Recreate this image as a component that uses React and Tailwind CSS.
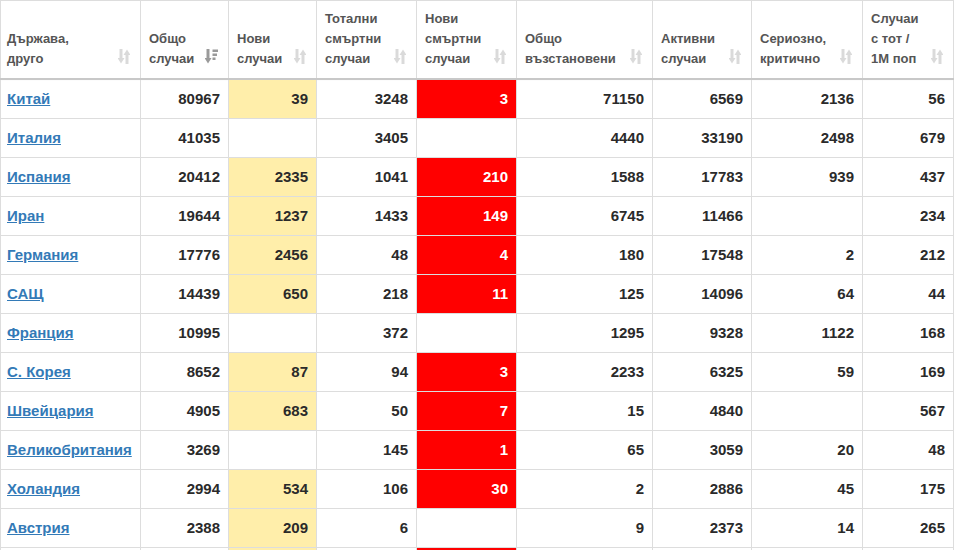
import React from 'react';

const columns = [
    { label: ['Държава,', 'друго'], width: 'w-[140px]' },
    { label: ['Общо', 'случаи'], width: 'w-[88px]', sorted: true },
    { label: ['Нови', 'случаи'], width: 'w-[88px]' },
    { label: ['Тотални', 'смъртни', 'случаи'], width: 'w-[100px]' },
    { label: ['Нови', 'смъртни', 'случаи'], width: 'w-[100px]' },
    { label: ['Общо', 'възстановени'], width: 'w-[136px]' },
    { label: ['Активни', 'случаи'], width: 'w-[99px]' },
    { label: ['Сериозно,', 'критично'], width: 'w-[111px]' },
    { label: ['Случаи', 'с тот /', '1М поп'], width: 'w-[91px]' },
];

// country, total, new, deaths, new deaths, recovered, active, serious, per 1M
const rows = [
    ['Китай', '80967', '39', '3248', '3', '71150', '6569', '2136', '56'],
    ['Италия', '41035', '', '3405', '', '4440', '33190', '2498', '679'],
    ['Испания', '20412', '2335', '1041', '210', '1588', '17783', '939', '437'],
    ['Иран', '19644', '1237', '1433', '149', '6745', '11466', '', '234'],
    ['Германия', '17776', '2456', '48', '4', '180', '17548', '2', '212'],
    ['САЩ', '14439', '650', '218', '11', '125', '14096', '64', '44'],
    ['Франция', '10995', '', '372', '', '1295', '9328', '1122', '168'],
    ['С. Корея', '8652', '87', '94', '3', '2233', '6325', '59', '169'],
    ['Швейцария', '4905', '683', '50', '7', '15', '4840', '', '567'],
    ['Великобритания', '3269', '', '145', '1', '65', '3059', '20', '48'],
    ['Холандия', '2994', '534', '106', '30', '2', '2886', '45', '175'],
    ['Австрия', '2388', '209', '6', '', '9', '2373', '14', '265'],
    ['Белгия', '2257', '462', '37', '16', '1', '2203', '33', '195'],
];

const SortIcon = () => (
    <svg width="12" height="15" viewBox="0 0 12 15" className="text-[#dadada]">
        <path d="M3 0v10" stroke="currentColor" strokeWidth="3" fill="none" />
        <path d="M-0.5 9h7l-3.5 5.5z" fill="currentColor" />
        <path d="M9 5v10" stroke="currentColor" strokeWidth="3" fill="none" />
        <path d="M5.5 6h7l-3.5-5.5z" fill="currentColor" />
    </svg>
);

const SortedIcon = () => (
    <svg width="13" height="15" viewBox="0 0 13 15" className="text-[#9a9a9a]">
        <path d="M3 0v10" stroke="currentColor" strokeWidth="3" fill="none" />
        <path d="M-0.5 9h7l-3.5 5.5z" fill="currentColor" />
        <rect x="7.5" y="0.5" width="5.5" height="2.5" fill="currentColor" />
        <rect x="7.5" y="4.5" width="4.5" height="2.5" fill="currentColor" />
        <rect x="7.5" y="8.5" width="3" height="2.5" fill="currentColor" />
    </svg>
);

const App = () => {
    return (
        <div className="bg-white w-[954px] font-['Liberation_Sans',Arial,sans-serif]">
            <table className="table-fixed border-collapse w-[954px] border border-[#dddddd]">
                <colgroup>
                    {columns.map((col, i) => (
                        <col key={i} className={col.width} />
                    ))}
                </colgroup>
                <thead>
                    <tr className="border-b-2 border-[#c8c8c8] shadow-[0_1px_1px_rgba(0,0,0,0.08)]">
                        {columns.map((col, i) => (
                            <th
                                key={i}
                                className={`relative border border-b-2 border-[#dddddd] border-b-[#c8c8c8] align-bottom text-left ${i === 0 ? 'pl-[6px]' : 'pl-2'} pr-7 pt-2 pb-[9px] text-[13px] leading-5 font-bold text-[#555555]`}
                            >
                                {col.label.map((line, j) => (
                                    <div key={j} className="whitespace-nowrap">{line}</div>
                                ))}
                                <span className="absolute right-[10px] bottom-[14px] flex">
                                    {col.sorted ? <SortedIcon /> : <SortIcon />}
                                </span>
                            </th>
                        ))}
                    </tr>
                </thead>
                <tbody>
                    {rows.map((row) => (
                        <tr key={row[0]}>
                            {row.map((val, i) => {
                                if (i === 0) {
                                    return (
                                        <td key={i} className="border border-[#dddddd] pl-[6px] pr-2 py-2 text-[15px] leading-[22px] text-left whitespace-nowrap">
                                            <a href="#" className="font-bold text-[#337ab7] underline">{val}</a>
                                        </td>
                                    );
                                }
                                let tone = 'text-[#2a2a2a]';
                                if (i === 2 && val) tone = 'bg-[#ffeeaa] text-[#2a2a2a]';
                                if (i === 4 && val) tone = 'bg-[#ff0000] text-white';
                                return (
                                    <td
                                        key={i}
                                        className={`border border-[#dddddd] px-2 py-2 text-[15px] leading-[22px] font-bold text-right ${tone}`}
                                    >
                                        {val}
                                    </td>
                                );
                            })}
                        </tr>
                    ))}
                </tbody>
            </table>
        </div>
    );
};

export default App;
